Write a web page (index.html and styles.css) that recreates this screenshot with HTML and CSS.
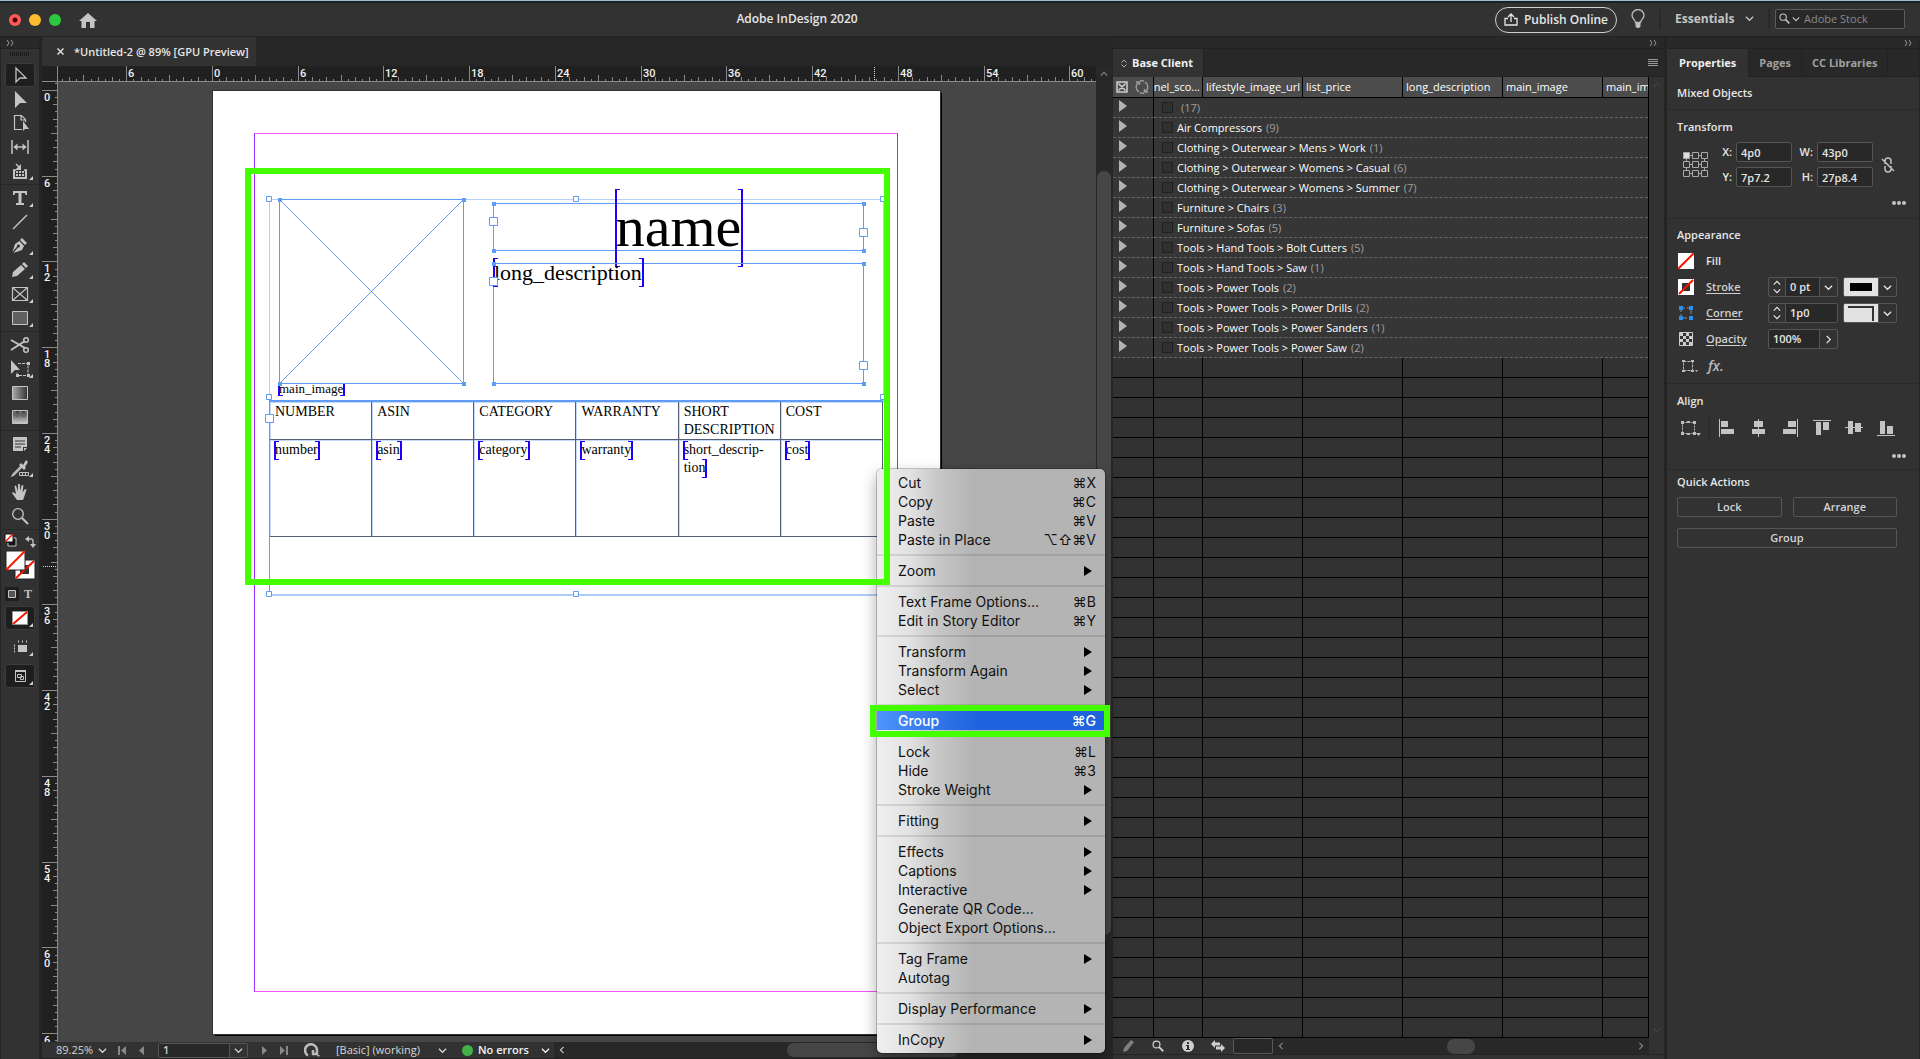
FILE: index.html
```html
<!DOCTYPE html>
<html lang="en">
<head>
<meta charset="utf-8">
<title>Adobe InDesign 2020</title>
<link rel="stylesheet" href="styles.css">
</head>
<body>
<svg class="defs" aria-hidden="true">
  <symbol id="chev" viewBox="0 0 10 10"><path d="M1 3l4 4 4-4" fill="none" stroke="currentColor" stroke-width="1.4"/></symbol>
  <symbol id="chev-up" viewBox="0 0 10 10"><path d="M1 7l4-4 4 4" fill="none" stroke="currentColor" stroke-width="1.4"/></symbol>
  <symbol id="chev-left" viewBox="0 0 10 10"><path d="M7 1L3 5l4 4" fill="none" stroke="currentColor" stroke-width="1.4"/></symbol>
  <symbol id="chev-right" viewBox="0 0 10 10"><path d="M3 1l4 4-4 4" fill="none" stroke="currentColor" stroke-width="1.4"/></symbol>
  <symbol id="dbl" viewBox="0 0 8 6"><path d="M1 0l2 3-2 3M5 0l2 3-2 3" fill="none" stroke="currentColor"/></symbol>
  <symbol id="dots" viewBox="0 0 14 4"><circle cx="2" cy="2" r="2"/><circle cx="7" cy="2" r="2"/><circle cx="12" cy="2" r="2"/></symbol>
  <symbol id="none" viewBox="0 0 16 16"><path d="M0 0h16v16H0z" fill="#fff"/><path d="M0 16L16 0" stroke="#f91400" stroke-width="2"/></symbol>
  <symbol id="tri" viewBox="0 0 8 10"><path d="M0 0l8 5-8 5z"/></symbol>
  <symbol id="mag" viewBox="0 0 16 16"><circle cx="6" cy="6" r="4.6" fill="none" stroke="currentColor" stroke-width="1.6"/><path d="M9.5 9.5L15 15" stroke="currentColor" stroke-width="2.4"/></symbol>
</svg>

<header class="titlebar">
  <div class="lights"><i class="light red"></i><i class="light amber"></i><i class="light lime"></i></div>
  <button class="home" aria-label="Home"><svg viewBox="0 0 18 15" width="18" height="15"><path d="M9 0l9 8h-2.500v7H11V9H7v6H2.500V8H0z" fill="#c4c4c4"/></svg></button>
  <h1 class="app-name">Adobe InDesign 2020</h1>
  <div class="title-tools">
    <button class="publish"><svg viewBox="0 0 14 13" width="14" height="13" fill="none" stroke="currentColor" stroke-width="1.300"><path d="M4 5.500H1V12h12V5.500h-3M7 9V1M4 4l3-3 3 3"/></svg>Publish Online</button>
    <button class="bulb" aria-label="Learn"><svg viewBox="0 0 14 20" width="14" height="20"><path d="M4.500 13.500C4.500 11 1 9.500 1 6.500a6 6 0 0 1 12 0c0 3-3.500 4.500-3.500 7z" fill="none" stroke="#bdbdbd" stroke-width="1.300"/><path d="M4.500 14h5v3.500L8 19H6l-1.500-1.500z" fill="#bdbdbd"/></svg></button>
    <span class="vbar"></span>
    <label class="pick workspace"><select aria-label="Workspace"><option>Essentials</option></select><svg width="9" height="9"><use href="#chev"/></svg></label>
    <span class="vbar"></span>
    <label class="stock"><svg width="11" height="11"><use href="#mag"/></svg><svg width="8" height="8"><use href="#chev"/></svg><input type="search" placeholder="Adobe Stock" aria-label="Adobe Stock"></label>
  </div>
</header>

<main class="workspace-grid">
  <nav class="tools" aria-label="Tools">
    <div class="strip strip-left"><svg width="8" height="6"><use href="#dbl"/></svg></div>
    <div class="grip"></div>
    <button class="tool on" aria-label="Selection"><svg viewBox="0 0 30 24"><path d="M11 5v14l4-4h6z" fill="none" stroke="#c4c4c4" stroke-width="1.300"/></svg></button>
    <button class="tool" aria-label="Direct selection"><svg viewBox="0 0 30 24"><path d="M10 4v17l5-5h7z"/></svg></button>
    <button class="tool" aria-label="Page"><svg viewBox="0 0 30 24"><path d="M17 18.500H9.500v-14h7l4 4V11M16 5v4h4" fill="none" stroke="#c4c4c4" stroke-width="1.200"/><path d="M18 10v10l2-2h4z"/></svg></button>
    <button class="tool" aria-label="Gap"><svg viewBox="0 0 30 24"><path d="M7 5v14M23 5v14M9 12h12" stroke="#c4c4c4" stroke-width="1.500"/><path d="M8.500 12l4-3.500v7zM21.500 12l-4-3.500v7z"/></svg></button>
    <button class="tool more" aria-label="Content collector"><svg viewBox="0 0 30 24"><path d="M9 11v8h12v-8" fill="none" stroke="#c4c4c4" stroke-width="2"/><path d="M8 11h3M19 11h3M11 5l4 4" stroke="#c4c4c4" stroke-width="1.500"/><path d="M16 5v6h-6zM11 12h2v2h-2zM14 12h2v2h-2zM17 12h2v2h-2zM11 15h2v2h-2zM14 15h2v2h-2zM17 15h2v2h-2z"/></svg></button>
    <hr>
    <button class="tool more" aria-label="Type"><svg viewBox="0 0 30 24"><path d="M8 5h14v4h-1.500l-.5-2h-3.500v10h2.500v2h-8v-2h2.500V7H10l-.5 2H8z"/></svg></button>
    <button class="tool" aria-label="Line"><svg viewBox="0 0 30 24"><path d="M8 19L22 5" stroke="#c4c4c4" stroke-width="1.500"/></svg></button>
    <button class="tool more" aria-label="Pen"><svg viewBox="0 0 30 24"><path d="M17 4l5 5-2 2-5-5zM14.500 7l4.500 5-2 4-8.500 3 4.500-5.500a1.500 1.500 0 1 0-1-1L7.500 18l2.500-8z"/></svg></button>
    <button class="tool more" aria-label="Pencil"><svg viewBox="0 0 30 24"><path d="M19 4l4 4-2 2-4-4zM16 7l4 4-8 7-5 1 1-5z"/></svg></button>
    <button class="tool more" aria-label="Rectangle frame"><svg viewBox="0 0 30 24"><path d="M7.500 5.500h15v13h-15zM7.500 5.500l15 13M22.500 5.500l-15 13" fill="none" stroke="#c4c4c4" stroke-width="1.200"/></svg></button>
    <button class="tool more" aria-label="Rectangle"><svg viewBox="0 0 30 24"><path d="M7.500 5.500h15v13h-15z" fill="#606060" stroke="#c4c4c4"/></svg></button>
    <hr>
    <button class="tool" aria-label="Scissors"><svg viewBox="0 0 30 24"><path d="M6 7l14 8M6 17L20 8" stroke="#c4c4c4" stroke-width="2"/><circle cx="21" cy="7" r="2.300" fill="none" stroke="#c4c4c4" stroke-width="1.500"/><circle cx="21" cy="17" r="2.300" fill="none" stroke="#c4c4c4" stroke-width="1.500"/></svg></button>
    <button class="tool more" aria-label="Free transform"><svg viewBox="0 0 30 24"><path d="M6 3v14l4-4h5z"/><path d="M13 6.500h10v12H12V15" fill="none" stroke="#c4c4c4" stroke-dasharray="3 1"/><path d="M22 5h3v3h-3zM22 17h3v3h-3zM11 17h3v3h-3z"/></svg></button>
    <button class="tool" aria-label="Gradient"><svg viewBox="0 0 30 24"><defs><linearGradient id="g1"><stop stop-color="#aaa"/><stop offset="1" stop-color="#333"/></linearGradient></defs><path d="M7.500 5.500h15v13h-15z" fill="url(#g1)" stroke="#c4c4c4"/></svg></button>
    <button class="tool" aria-label="Gradient feather"><svg viewBox="0 0 30 24"><defs><linearGradient id="g2" x2="0" y2="1"><stop stop-color="#333"/><stop offset="1" stop-color="#ccc"/></linearGradient></defs><path d="M7.500 5.500h15v13h-15z" fill="url(#g2)" stroke="#c4c4c4"/><path d="M8 6h3v3H8zM14 6h3v3h-3zM20 6h2v3h-2zM11 9h3v3h-3zM17 9h3v3h-3z" fill="#666"/></svg></button>
    <hr>
    <button class="tool" aria-label="Note"><svg viewBox="0 0 30 24"><path d="M8 5h14v10h-4v4H8zM22 16l-3 3v-3z"/><path d="M10 9h10M10 12h10M10 15h6" stroke="#333"/></svg></button>
    <button class="tool more" aria-label="Eyedropper"><svg viewBox="0 0 30 24"><path d="M18 9l3-5 2 2-3 5 1 1-2 2-5-5 2-2z"/><path d="M16 10l-8 8-1 2 2-1 8-8" fill="none" stroke="#c4c4c4" stroke-width="1.200"/><path d="M14.500 16.500h9v3h-9zM17.500 16v4M20.500 16v4" fill="none" stroke="#c4c4c4"/></svg></button>
    <button class="tool" aria-label="Hand"><svg viewBox="0 0 30 24"><path d="M12 20l-5-7 1-1 3 2-1.500-8 1.500-.5 2 6V4h1.800l.4 7 1.500-6 1.700.4-.8 7L20 9l1.500.5-2 6.500-1.500 4z"/></svg></button>
    <button class="tool" aria-label="Zoom"><svg viewBox="0 0 30 24"><circle cx="13" cy="10" r="5.300" fill="none" stroke="#c4c4c4" stroke-width="1.300"/><path d="M17 14l6 6" stroke="#c4c4c4" stroke-width="2"/></svg></button>
    <hr>
    <div class="swatches">
      <svg viewBox="0 0 40 48" width="40" height="48">
        <path d="M9 6h7v8H8v-3" fill="#111" stroke="#c4c4c4"/><path d="M5 2h8v8H5z" fill="#fff" stroke="#111"/><path d="M5 10l8-8" stroke="#f91400" stroke-width="1.500"/>
        <path d="M28 7h3q2 0 2 2v4" fill="none" stroke="#c4c4c4" stroke-width="1.300"/><path d="M25 7l4-3v6zM33 16l-3-4h6z" fill="#c4c4c4"/>
        <path d="M15 28h20v19H15z" fill="#fff" stroke="#222"/><path d="M20 33h9v9h-9z" fill="#333"/><path d="M16 46l18-17" stroke="#f91400" stroke-width="2"/>
        <path d="M6 19h19v19H6z" fill="#fff" stroke="#222"/><path d="M6 38l19-19" stroke="#f91400" stroke-width="2"/>
      </svg>
    </div>
    <div class="mode-row">
      <button class="mini on" aria-label="Container"><svg viewBox="0 0 8 8" width="8" height="8"><path d="M.5.5h7v7h-7z" fill="#555" stroke="#c4c4c4"/></svg></button>
      <button class="mini" aria-label="Text">T</button>
    </div>
    <button class="tool on more spaced" aria-label="Apply none"><svg viewBox="0 0 30 24"><path d="M7.500 5.500h15v13h-15z" fill="#fff" stroke="#999"/><path d="M8 18L22 6" stroke="#f91400" stroke-width="2"/></svg></button>
    <button class="tool more spaced" aria-label="View options"><svg viewBox="0 0 30 24"><path d="M13 10h9v7h-9z"/><path d="M13 6.500h11M9 10.500h3M9 13.500h3M9 16.500h3" stroke="#c4c4c4" stroke-width="2" stroke-dasharray="1 3"/></svg></button>
    <button class="tool on more spaced" aria-label="Screen mode"><svg viewBox="0 0 30 24"><path d="M10.500 6.500h10v11h-10z" fill="none" stroke="#c4c4c4"/><path d="M10 6h11v2H10z"/><path d="M12.500 10.500h4v3h-4zM15.500 12.500h3v3h-3z" fill="none" stroke="#c4c4c4"/></svg></button>
  </nav>

  <section class="doc">
    <div class="doc-tabs"><div class="doc-tab"><button class="close" aria-label="Close"><svg viewBox="0 0 7 7" width="7" height="7"><path d="M.5.5l6 6M6.500.5l-6 6" stroke="#ddd" stroke-width="1.500"/></svg></button><span>*Untitled-2 @ 89% [GPU Preview]</span></div></div>
    <div class="doc-view">
      <div class="ruler-corner"></div>
      <svg class="ruler-h" id="ruler-h"></svg>
      <div class="vscroll"><svg width="8" height="8"><use href="#chev-up"/></svg><i class="vthumb"></i></div>
      <svg class="ruler-v" id="ruler-v"></svg>
      <div class="canvas">
        <div class="page">
          <div class="margins"></div>
          <div class="bounds"></div>
          <div class="frame text-frame name-frame"><span class="tag name-tag">name</span></div>
          <div class="frame text-frame desc-frame"><span class="tag desc-tag">long_description</span></div>
          <div class="caption"><span class="tag">main_image</span></div>
          <table class="layout-table">
            <thead><tr><th>NUMBER</th><th>ASIN</th><th>CATEGORY</th><th>WARRANTY</th><th>SHORT DESCRIPTION</th><th>COST</th></tr></thead>
            <tbody><tr><td><span class="tag">number</span></td><td><span class="tag">asin</span></td><td><span class="tag">category</span></td><td><span class="tag">warranty</span></td><td><span class="tag open">short_descrip-</span><br><span class="tag shut">tion</span></td><td><span class="tag">cost</span></td></tr></tbody>
          </table>
          <svg class="handles" width="630" height="406" viewBox="0 0 630 406" fill="none" stroke="#5f9cf8">
            <path d="M17.500 7.500h184v184h-184zM17.500 7.500l184 184M201.500 7.500l-184 184"/>
            <path d="M7.500 209v194h615"/>
            <g fill="#5f9cf8" stroke="none">
              <path d="M16 6h4v4h-4zM200 6h4v4h-4zM16 190h4v4h-4zM200 190h4v4h-4z"/>
              <path d="M230 10h4v4h-4zM600 10h4v4h-4zM230 57h4v4h-4zM600 57h4v4h-4zM230 70h4v4h-4zM600 70h4v4h-4zM230 190h4v4h-4zM600 190h4v4h-4z"/>
            </g>
            <g fill="#fff">
              <path d="M4.500 4.500h5v5h-5zM311.500 4.500h5v5h-5zM618.500 4.500h5v5h-5zM4.500 202.500h5v5h-5zM618.500 202.500h5v5h-5zM4.500 399.500h5v5h-5zM311.500 399.500h5v5h-5z"/>
              <path d="M227.500 25.500h8v8h-8zM597.500 36.500h8v8h-8zM227.500 85.500h8v8h-8zM597.500 169.500h8v8h-8zM3.500 222.500h8v8h-8z"/>
            </g>
          </svg>
        </div>
      </div>
    </div>
    <footer class="status">
      <label class="pick zoom-pick"><select aria-label="Zoom"><option>89.25%</option></select><svg width="9" height="9"><use href="#chev"/></svg></label>
      <button class="nav-btn first" aria-label="First page"><svg viewBox="0 0 8 9" width="8" height="9"><path d="M0 0h2v9H0zM8 0v9L3 4.500z"/></svg></button>
      <button class="nav-btn prev" aria-label="Previous page"><svg viewBox="0 0 8 9" width="8" height="9"><path d="M6 0v9L1 4.500z"/></svg></button>
      <div class="page-box"><input value="1" aria-label="Page"><button aria-label="Pages"><svg width="9" height="9"><use href="#chev"/></svg></button></div>
      <button class="nav-btn next" aria-label="Next page"><svg viewBox="0 0 8 9" width="8" height="9"><path d="M2 0v9l5-4.500z"/></svg></button>
      <button class="nav-btn last" aria-label="Last page"><svg viewBox="0 0 8 9" width="8" height="9"><path d="M6 0h2v9H6zM0 0v9l5-4.500z"/></svg></button>
      <svg class="ahead" viewBox="0 0 16 14" width="16" height="14"><path d="M4 12.500A6 6 0 1 1 13 7v4H9V7" fill="none" stroke="#bbb" stroke-width="2.500"/><path d="M13 12h3l-1.500 2z" fill="#bbb"/></svg>
      <label class="pick profile-pick"><select aria-label="Preflight profile"><option>[Basic] (working)</option></select><svg width="9" height="9"><use href="#chev"/></svg></label>
      <i class="ok"></i>
      <label class="pick errors-pick"><select aria-label="Errors"><option>No errors</option></select><svg width="9" height="9"><use href="#chev"/></svg></label>
      <div class="hscroll"><svg width="8" height="8"><use href="#chev-left"/></svg><i class="hthumb"></i></div>
    </footer>

    <ul class="menu" role="menu">
      <li>Cut<kbd>⌘X</kbd></li><li>Copy<kbd>⌘C</kbd></li><li>Paste<kbd>⌘V</kbd></li><li>Paste in Place<kbd>⌥⇧⌘V</kbd></li>
      <li class="sep"></li>
      <li class="sub">Zoom<svg width="8" height="10"><use href="#tri"/></svg></li>
      <li class="sep"></li>
      <li>Text Frame Options...<kbd>⌘B</kbd></li><li>Edit in Story Editor<kbd>⌘Y</kbd></li>
      <li class="sep"></li>
      <li class="sub">Transform<svg width="8" height="10"><use href="#tri"/></svg></li><li class="sub">Transform Again<svg width="8" height="10"><use href="#tri"/></svg></li><li class="sub">Select<svg width="8" height="10"><use href="#tri"/></svg></li>
      <li class="sep"></li>
      <li class="active">Group<kbd>⌘G</kbd></li>
      <li class="sep"></li>
      <li>Lock<kbd>⌘L</kbd></li><li>Hide<kbd>⌘3</kbd></li><li class="sub">Stroke Weight<svg width="8" height="10"><use href="#tri"/></svg></li>
      <li class="sep"></li>
      <li class="sub">Fitting<svg width="8" height="10"><use href="#tri"/></svg></li>
      <li class="sep"></li>
      <li class="sub">Effects<svg width="8" height="10"><use href="#tri"/></svg></li><li class="sub">Captions<svg width="8" height="10"><use href="#tri"/></svg></li><li class="sub">Interactive<svg width="8" height="10"><use href="#tri"/></svg></li><li>Generate QR Code...</li><li>Object Export Options...</li>
      <li class="sep"></li>
      <li class="sub">Tag Frame<svg width="8" height="10"><use href="#tri"/></svg></li><li>Autotag</li>
      <li class="sep"></li>
      <li class="sub">Display Performance<svg width="8" height="10"><use href="#tri"/></svg></li>
      <li class="sep"></li>
      <li class="sub">InCopy<svg width="8" height="10"><use href="#tri"/></svg></li>
    </ul>
    <div class="marker marker-selection"></div>
    <div class="marker marker-menu"></div>
  </section>

  <section class="data">
    <div class="strip strip-right"><svg width="8" height="6"><use href="#dbl"/></svg></div>
    <div class="panel-tabs">
      <button class="panel-tab active"><svg viewBox="0 0 6 9" width="6" height="9" fill="none" stroke="#aaa"><path d="M.5 3.500L3 1l2.500 2.500M.5 5.500L3 8l2.500-2.500"/></svg>Base Client</button>
      <button class="burger" aria-label="Panel menu"><svg viewBox="0 0 10 8" width="10" height="8"><path d="M0 .5h10M0 2.500h10M0 4.500h10M0 6.500h10" stroke="#999"/></svg></button>
    </div>
    <div class="data-body">
      <table class="grid">
        <colgroup><col class="c-tools"><col class="c-score"><col class="c-std"><col class="c-std"><col class="c-std"><col class="c-std"><col></colgroup>
        <thead><tr>
          <th class="head-icons"><div><svg viewBox="0 0 12 12" width="12" height="12" fill="none" stroke="#d0d0d0" stroke-width="1.500"><path d="M1 1h10v10H1zM2.500 2.500l7 7M9.500 2.500l-7 7"/></svg><svg viewBox="0 0 16 16" width="16" height="16" fill="none" stroke="#9a9a9a" stroke-width="1.500"><path d="M5 3a6 6 0 0 0-2 8l2 2M2 3h3.500v3M6 14a6 6 0 0 0 4 0M11 13a6 6 0 0 0 2-8l-2-2M14 13h-3.500v-3M10 2a6 6 0 0 0-4 0"/></svg></div></th>
          <th class="cut"><div>nnel_sco...</div></th><th>lifestyle_image_url</th><th>list_price</th><th>long_description</th><th>main_image</th><th>main_ima</th>
        </tr></thead>
        <tbody id="rows"></tbody>
      </table>
      <div class="data-scroll"><svg width="8" height="8"><use href="#chev-up"/></svg><svg width="8" height="8"><use href="#chev"/></svg></div>
    </div>
    <footer class="data-foot">
      <button aria-label="Edit"><svg viewBox="0 0 12 12" width="12" height="12" fill="#808080"><path d="M9 0l3 2-7 9-4 1 1-4z"/></svg></button>
      <button aria-label="Search"><svg width="12" height="12"><use href="#mag"/></svg></button>
      <button aria-label="Info"><svg viewBox="0 0 12 12" width="12" height="12"><circle cx="6" cy="6" r="6" fill="#d0d0d0"/><path d="M5 2h2v2H5zM4 5h3v4h1v1H4V9h1V6H4z" fill="#333"/></svg></button>
      <button aria-label="Sync"><svg viewBox="0 0 14 12" width="14" height="12" fill="#d0d0d0"><path d="M4 0v2.500h5v3H4V8L0 4zM10 4v2.500H5v3h5V12l4-4z"/></svg></button>
      <input aria-label="Filter">
      <div class="foot-scroll"><svg width="8" height="8"><use href="#chev-left"/></svg><i></i><svg width="8" height="8"><use href="#chev-right"/></svg></div>
    </footer>
  </section>

  <aside class="props">
    <div class="strip strip-right"><svg width="8" height="6"><use href="#dbl"/></svg></div>
    <div class="panel-tabs">
      <button class="panel-tab active first-tab">Properties</button><button class="panel-tab">Pages</button><button class="panel-tab">CC Libraries</button>
    </div>
    <section class="kind"><h2>Mixed Objects</h2></section>
    <section class="transform">
      <h2>Transform</h2>
      <div class="transform-row">
        <svg viewBox="0 0 26 26" width="26" height="26" fill="none" stroke="#a8a8a8"><path d="M7 3.500h3M16 3.500h3M7 12.500h3M16 12.500h3M7 21.500h3M16 21.500h3M3.500 7v3M3.500 16v3M21.500 7v3M21.500 16v3"/><path d="M.5.5h6v6h-6z" fill="#ddd"/><path d="M9.500.5h6v6h-6zM18.500.5h6v6h-6zM.5 9.500h6v6h-6zM9.500 9.500h6v6h-6zM18.500 9.500h6v6h-6zM.5 18.500h6v6h-6zM9.500 18.500h6v6h-6zM18.500 18.500h6v6h-6z"/></svg>
        <div class="fields">
          <label for="fx">X:</label><input id="fx" value="4p0"><label for="fw">W:</label><input id="fw" value="43p0">
          <label for="fy">Y:</label><input id="fy" value="7p7.2"><label for="fh">H:</label><input id="fh" value="27p8.4">
        </div>
        <svg class="link" viewBox="0 0 14 16" width="14" height="16" fill="none" stroke="#c0c0c0" stroke-width="1.500"><path d="M4 7V4a3 3 0 0 1 6 0v3M4 9v3a3 3 0 0 0 6 0V9M1 2l12 12"/></svg>
      </div>
      <button class="ellipsis" aria-label="More transform options"><svg width="14" height="4"><use href="#dots"/></svg></button>
    </section>
    <section class="appearance">
      <h2>Appearance</h2>
      <div class="look">
        <svg width="16" height="16"><use href="#none"/></svg><span class="plain">Fill</span><span></span><span></span>
        <svg viewBox="0 0 16 16" width="16" height="16"><path d="M0 0h16v16H0z" fill="#fff"/><path d="M4 4h8v8H4z" fill="#333"/><path d="M1 15L15 1" stroke="#f91400" stroke-width="2"/></svg><a href="#">Stroke</a>
        <div class="combo"><button class="spin" aria-label="Step stroke"><svg width="8" height="8"><use href="#chev-up"/></svg><svg width="8" height="8"><use href="#chev"/></svg></button><input value="0 pt" aria-label="Stroke weight"><button class="drop" aria-label="Weights"><svg width="9" height="9"><use href="#chev"/></svg></button></div>
        <div class="combo sample"><span class="chip"><i class="bar"></i></span><button class="drop" aria-label="Stroke types"><svg width="9" height="9"><use href="#chev"/></svg></button></div>
        <svg viewBox="0 0 16 16" width="16" height="16"><path d="M3 3h10v10H3z" fill="none" stroke="#888" stroke-dasharray="4 2"/><path d="M1 1h4v4H1zM11 1h4v4h-4zM1 11h4v4H1zM11 11h4v4h-4z" fill="#2f8df0"/></svg><a href="#">Corner</a>
        <div class="combo"><button class="spin" aria-label="Step corner"><svg width="8" height="8"><use href="#chev-up"/></svg><svg width="8" height="8"><use href="#chev"/></svg></button><input value="1p0" aria-label="Corner size"></div>
        <div class="combo sample"><span class="chip"><i class="corner"></i></span><button class="drop" aria-label="Corner shapes"><svg width="9" height="9"><use href="#chev"/></svg></button></div>
        <svg viewBox="0 0 16 16" width="16" height="16"><path d="M1.500 1.500h13v13h-13z" fill="#333" stroke="#ccc"/><path d="M2 2h3v3H2zM8 2h3v3H8zM5 5h3v3H5zM11 5h3v3h-3zM2 8h3v3H2zM8 8h3v3H8zM5 11h3v3H5zM11 11h3v3h-3z" fill="#ccc"/></svg><a href="#">Opacity</a>
        <div class="combo"><input value="100%" aria-label="Opacity value"><button class="drop" aria-label="Opacity slider"><svg width="9" height="9"><use href="#chev-right"/></svg></button></div>
      </div>
      <div class="fx-row">
        <button aria-label="Object target"><svg viewBox="0 0 16 14" width="16" height="14"><path d="M1.500 2.500h9v9h-9z" fill="none" stroke="#bbb" stroke-dasharray="3 1"/><path d="M0 1h3v2H0zM9 1h3v2H9zM0 11h3v2H0zM9 11h3v2H9zM13 11h3l-1.500 2z" fill="#bbb"/></svg></button>
        <button class="fx">fx<span>.</span></button>
      </div>
    </section>
    <section class="align">
      <h2>Align</h2>
      <div class="align-row">
        <button aria-label="Align to"><svg viewBox="0 0 20 18" width="20" height="18"><path d="M1.500 3.500h12v11h-12z" fill="none" stroke="#bbb" stroke-dasharray="2 1"/><path d="M0 2h3v3H0zM6 2h3v2H6zM12 2h3v3h-3zM0 13h3v3H0zM12 13h3v3h-3zM6 14h3v2H6zM15 14h5l-2.500 3z" fill="#bbb"/></svg></button>
        <span class="vbar"></span>
        <button aria-label="Align left"><svg viewBox="0 0 18 18"><path d="M1 0h1v18H1zM3 2h7v6H3zM3 10h13v5H3z"/></svg></button>
        <button aria-label="Align centre"><svg viewBox="0 0 18 18"><path d="M8 0h1v18H8zM4 2h9v6H4zM2 10h13v5H2z"/></svg></button>
        <button aria-label="Align right"><svg viewBox="0 0 18 18"><path d="M16 0h1v18h-1zM7 2h8v6H7zM2 10h13v5H2z"/></svg></button>
        <button aria-label="Align top"><svg viewBox="0 0 18 18"><path d="M0 1h18v1H0zM3 3h5v13H3zM10 3h6v8h-6z"/></svg></button>
        <button aria-label="Align middle"><svg viewBox="0 0 18 18"><path d="M0 8h18v1H0zM3 2h5v13H3zM10 4h6v9h-6z"/></svg></button>
        <button aria-label="Align bottom"><svg viewBox="0 0 18 18"><path d="M0 16h18v1H0zM3 2h5v13H3zM10 7h6v8h-6z"/></svg></button>
      </div>
      <button class="ellipsis" aria-label="More align options"><svg width="14" height="4"><use href="#dots"/></svg></button>
    </section>
    <section class="quick">
      <h2>Quick Actions</h2>
      <div class="quick-grid"><button>Lock</button><button>Arrange</button><button class="full">Group</button></div>
    </section>
  </aside>
</main>
<script src="app.js"></script>
</body>
</html>
```
FILE: styles.css
```css
* { box-sizing: border-box; }
html, body { height: 100%; }
body {
  margin: 0;
  display: flex;
  flex-direction: column;
  overflow: hidden;
  background: #323232;
  color: #e6e6e6;
  font: 600 11px/16px "Open Sans", "Noto Sans", sans-serif;
}
button, input, select { font: inherit; color: inherit; }
button { padding: 0; border: 0; background: none; display: inline-flex; align-items: center; justify-content: center; }
select { appearance: none; border: 0; background: none; padding: 0; margin: 0; }
input { min-width: 0; margin: 0; padding: 0 4px; border: 0; background: #282828; border-radius: 0; }
h1, h2 { margin: 0; font: inherit; }
svg { flex: none; display: block; }
.defs { position: absolute; width: 0; height: 0; }

/* Title bar */
.titlebar {
  display: grid;
  grid-template-columns: minmax(0, 1fr) auto minmax(0, 1fr);
  align-items: center;
  height: 37px;
  flex: none;
  padding: 0 15px 0 9px;
  border-top: 1px solid #a9bcc6;
  border-bottom: 1px solid #222;
  box-shadow: inset 0 2px 0 #14222a;
}
.lights { grid-area: 1 / 1; display: flex; gap: 8px; }
.light { width: 12px; height: 12px; border-radius: 50%; margin-top: 3px; }
.red { background: radial-gradient(circle, #4d0000 2px, #fc5b57 3px); }
.amber { background: #fdbc2e; }
.lime { background: #2bc840; }
.home { grid-area: 1 / 1; justify-self: start; margin-left: 70px; margin-top: 3px; }
.app-name { grid-area: 1 / 2; font-size: 12px; margin-right: 320px; }
.title-tools { grid-area: 1 / 3; display: flex; align-items: center; justify-content: flex-end; gap: 14px; }
.publish { height: 26px; width: 122px; flex: none; gap: 6px; border: 1px solid #d0d0d0; border-radius: 13px; font-size: 12px; margin-top: 2px; }
.vbar { width: 2px; height: 20px; background: #2a2a2a; }
.pick { display: flex; align-items: center; color: #d6d6d6; }
.workspace { gap: 4px; font-size: 12px; font-weight: 700; color: #c4c4c4; }
.workspace select { width: 66px; }
.stock { display: flex; align-items: center; gap: 2px; width: 130px; height: 20px; padding: 0 3px; border: 1px solid #5c5c5c; border-radius: 2px; background: #282828; color: #c4c4c4; margin-left: -9px; }
.stock input { flex: 1; font-weight: 400; padding: 0 2px; outline: 0; background: none; }
.stock input::placeholder { color: #8a8a8a; opacity: 1; }

.workspace-grid { flex: 1; min-height: 0; display: grid; grid-template-columns: 42px minmax(0, 1fr) 554px 253px; }

/* Tool column */
.strip { height: 12px; flex: none; display: flex; align-items: center; background: #282828; border-bottom: 1px solid #222; color: #999; }
.strip-left { padding-left: 5px; }
.strip-right { justify-content: flex-end; padding-right: 7px; }
.tools { display: flex; flex-direction: column; border-right: 3px solid #242424; border-left: 1px solid #242424; padding-bottom: 8px; }
.grip { width: 20px; height: 4px; margin: 3px 9px 7px; background: repeating-linear-gradient(90deg, #1c1c1c 0 1px, #323232 1px 2px); }
.tool { position: relative; height: 24px; flex: none; margin: 0 4px; border: 1px solid transparent; border-radius: 3px; fill: #c4c4c4; }
.tool svg { width: 30px; height: 24px; }
.tool.on { background: #1e1e1e; border-color: #3c3c3c; }
.tool.more::after { content: ""; position: absolute; right: 1px; bottom: 2px; border: 2px solid transparent; border-right-color: #d0d0d0; border-bottom-color: #d0d0d0; }
.tools hr { width: 36px; margin: 1px auto; border: 0; height: 1px; flex: none; background: #272727; }
.swatches { margin-left: -1px; padding-top: 1px; height: 52px; }
.mode-row { display: flex; gap: 2px; padding: 4px 4px 5px; }
.mini { width: 14px; height: 14px; border-radius: 2px; font: 700 12px/14px "Liberation Serif", serif; color: #c4c4c4; }
.mini.on { background: #1e1e1e; }
.tool.spaced { margin-bottom: 5px; }

/* Document */
.doc { display: flex; flex-direction: column; min-width: 0; position: relative; border-right: 2px solid #262626; }
.doc-tabs { height: 29px; flex: none; background: #262626; display: flex; }
.doc-tab { display: flex; align-items: center; gap: 10px; width: 214px; padding-left: 15px; background: #323232; }
.doc-view { flex: 1; min-height: 0; display: grid; grid-template: 16px minmax(0, 1fr) / 16px minmax(0, 1fr) 15px; }
.ruler-corner { background: radial-gradient(#888 1px, #202020 1px) 0 0 / 3px 3px; background: #202020; border-right: 1px solid #8a8a8a; border-bottom: 1px solid #8a8a8a; }
.ruler-h, .ruler-v { width: 100%; height: 100%; background: #202020; overflow: hidden; }
.ruler-h { border-bottom: 1px solid #8a8a8a; }
.ruler-v { border-right: 1px solid #8a8a8a; }
.ruler-h text, .ruler-v text { fill: #f0f0f0; font: 500 11px Roboto, sans-serif; }
.vscroll { grid-area: 1 / 3 / 3 / 4; background: #282828; display: flex; flex-direction: column; align-items: center; padding-top: 4px; color: #888; }
.vthumb { width: 14px; height: 764px; margin-top: 93px; border-radius: 7px; background: #464646; }
.canvas { position: relative; overflow: hidden; background: #464646; }
.page { position: absolute; left: 155px; top: 9px; width: 727px; height: 943px; background: #fff; box-shadow: 0 0 0 1px #333, 2px 2px 0 #000; color: #000; font: 14px/18px "Liberation Serif", serif; }
.margins { position: absolute; left: 41px; top: 42px; width: 644px; height: 859px; border: 1px solid #f055f5; border-left-color: #9b30ff; border-right-color: #9b30ff; }
.bounds { position: absolute; left: 56px; top: 108px; width: 615px; height: 204px; border: 1px solid #b4d0fb; border-bottom: 0; }
.frame { position: absolute; left: 280px; width: 371px; border: 1px solid #5f9cf8; }
.name-frame { top: 112px; height: 48px; font-size: 58px; line-height: 46px; text-align: center; }
.desc-frame { top: 172px; height: 121px; font-size: 22px; line-height: 18px; }
.caption { position: absolute; left: 66px; top: 292px; font-size: 13px; line-height: 12px; }
.handles { position: absolute; left: 49px; top: 101px; }
.tag { position: relative; display: inline-block; }
.tag::before, .tag::after { content: ""; position: absolute; top: 0; bottom: -1px; width: 3px; border: 1px solid #1f00ff; }
.tag::before { left: -1px; border-left-width: 2px; border-right: 0; }
.tag::after { right: -2px; border-right-width: 2px; border-left: 0; }
.tag.open::after, .tag.shut::before { display: none; }
.name-tag { height: 46px; }
.name-tag::before, .name-tag::after { top: -15px; bottom: -17px; }
.desc-tag::before, .desc-tag::after { top: -6px; bottom: -5px; }
.layout-table { position: absolute; left: 56px; top: 309px; width: 614px; table-layout: fixed; border-collapse: collapse; border: 1px solid #555f75; border-top: 2px solid #5f9cf8; }
.layout-table th, .layout-table td { padding: 1px 4px 0 5px; vertical-align: top; text-align: left; font-weight: 400; border: 1px solid #555f75; box-shadow: inset 1px 1px 0 #c3dafc; }
.layout-table th { height: 37px; }
.layout-table td { height: 97px; }
.marker { position: absolute; border: 6px solid #44ff00; pointer-events: none; }
.marker-selection { left: 203px; top: 131px; width: 645px; height: 417px; }
.marker-menu { left: 828px; top: 668px; width: 240px; height: 32px; }

/* Status bar */
.status { height: 17px; flex: none; display: flex; align-items: center; background: #323232; border-bottom: 1px solid #222; color: #ccc; fill: #888; }
.status select { font-weight: 400; }
.zoom-pick { margin-left: 14px; width: 62px; gap: 4px; }
.zoom-pick select { width: 38px; }
.nav-btn { width: 8px; }
.prev, .next, .last { margin-left: 12px; }
.page-box { display: flex; width: 90px; height: 15px; margin-left: 12px; border: 1px solid #555; border-radius: 2px; }
.page-box input { width: 71px; border-right: 1px solid #555; }
.page-box button { flex: 1; }
.ahead { margin: 0 16px; }
.profile-pick { width: 126px; }
.profile-pick select { width: 102px; }
.ok { width: 11px; height: 11px; border-radius: 50%; background: #44b04a; margin-right: 5px; }
.errors-pick { width: 76px; color: #f2f2f2; }
.errors-pick select { width: 63px; font-weight: 600; }
.hscroll { flex: 1; align-self: stretch; display: flex; align-items: center; padding-left: 4px; background: #282828; }
.hthumb { width: 171px; height: 14px; margin-left: 221px; border-radius: 7px; background: #464646; }

/* Context menu */
.menu {
  position: absolute;
  left: 835px;
  top: 432px;
  width: 228px;
  margin: 0;
  padding: 4px 0;
  list-style: none;
  border-radius: 5px;
  background: linear-gradient(90deg, #efeff0 0, #e2e2e2 32px, #c8c8c8 60px, #b4b4b4 95px);
  box-shadow: 0 0 0 1px rgba(0, 0, 0, .2), 0 6px 16px rgba(0, 0, 0, .35);
  color: #111;
  font: 400 14px/19px Inter, sans-serif;
}
.menu li { display: flex; justify-content: space-between; align-items: center; height: 19px; padding: 0 9px 0 21px; }
.menu .sub { padding-right: 13px; }
.menu kbd { font: inherit; }
.menu .sep { height: 2px; margin: 5px 0; padding: 0; background: rgba(0, 0, 0, .1); }
.menu .active { background: linear-gradient(90deg, #4f93fb, #2063de 100px); color: #fff; font-weight: 500; }

/* Data panel */
.data { display: flex; flex-direction: column; min-width: 0; border-right: 3px solid #242424; padding-bottom: 4px; }
.panel-tabs { height: 28px; flex: none; display: flex; background: #282828; border-bottom: 1px solid #222; }
.panel-tab { padding: 0 10px; gap: 5px; font-size: 11px; font-weight: 700; color: #a0a0a0; border-right: 1px solid #222; }
.panel-tab.active { background: #323232; color: #f0f0f0; margin-bottom: -1px; }
.panel-tab.active:not(.first-tab) { padding-left: 8px; }
.panel-tab.first-tab { padding: 0 12px; }
.burger { margin-left: auto; padding-right: 6px; }
.data-body { flex: 1; min-height: 0; display: flex; overflow: hidden; }
.grid { flex: 1; width: 100%; align-self: flex-start; table-layout: fixed; border-spacing: 0; border-right: 1px solid #000; font-weight: 500; }
.c-tools { width: 41px; }
.c-score { width: 49px; }
.c-std { width: 100px; }
.grid th { height: 21px; padding: 0 0 0 3px; overflow: hidden; white-space: nowrap; text-align: left; font-weight: 500; color: #fff; background: #4c4c4c; border-right: 1px solid #000; border-bottom: 1px solid #000; }
.grid th:last-child, .grid td:last-child { border-right: 0; }
.grid th div { display: flex; align-items: center; gap: 6px; }
.grid .cut { padding: 0 2px 0 0; }
.grid .cut div { justify-content: flex-end; overflow: hidden; }
.grid td { height: 20px; padding: 0; border-right: 1px solid #000; border-bottom: 1px solid #000; }
.grid .group td { border-bottom: 1px dashed #666; background: #363636; color: #fff; white-space: nowrap; }
.twist { width: 100%; height: 12px; padding-left: 6px; justify-content: flex-start; fill: #b4b4b4; }
.twist svg { margin-top: 2px; }
.grid label { display: flex; align-items: center; padding-left: 8px; height: 18px; }
.grid input { appearance: none; width: 11px; height: 11px; margin-right: 4px; background: #303030; border: 1px solid #202020; }
.count { color: #a0a0a0; font-weight: 400; margin-left: 4px; }
.data-scroll { width: 15px; display: flex; flex-direction: column; justify-content: space-between; align-items: center; padding: 4px 0; color: #444; }
.data-foot { height: 17px; flex: none; display: flex; align-items: center; border-bottom: 1px solid #242424; }
.data-foot button { width: 30px; color: #d0d0d0; }
.data-foot input { width: 40px; height: 16px; border: 1px solid #5a5a5a; border-radius: 2px; }
.foot-scroll { flex: 1; height: 16px; margin-right: 15px; padding: 0 4px; display: flex; align-items: center; justify-content: space-between; background: #282828; color: #888; }
.foot-scroll i { width: 28px; height: 15px; border-radius: 7px; background: #464646; }

/* Properties panel */
.props { min-width: 0; border-right: 1px solid #242424; }
.props section { padding: 0 22px 0 10px; border-bottom: 1px solid #2a2a2a; }
.props .kind { padding-top: 8px; padding-bottom: 8px; }
.props .transform { padding-top: 9px; }
.transform-row { display: flex; align-items: center; margin-top: 7px; padding-left: 6px; }
.fields { flex: 1; display: grid; grid-template-columns: 27px 1fr 25px 1fr; gap: 5px 0; align-items: center; margin-right: 8px; }
.fields label { text-align: right; padding-right: 4px; }
.fields input, .combo { height: 20px; border: 1px solid #555; border-radius: 2px; }
.link { margin-right: 2px; }
.ellipsis { display: flex; margin: 0 -9px 0 auto; height: 31px; fill: #c4c4c4; }
.props .appearance { padding-top: 8px; padding-bottom: 7px; }
.look { display: grid; grid-template-columns: 28px 62px 70px 1fr; grid-auto-rows: 20px; row-gap: 6px; align-items: center; margin-top: 8px; padding-left: 1px; }
.look a { color: #d0d0d0; text-underline-offset: 2px; }
.combo { display: flex; align-items: stretch; overflow: hidden; color: #e6e6e6; }
.combo input { flex: 1; width: 20px; }
.spin { width: 17px; flex-direction: column; border-right: 1px solid #555; }
.drop { width: 18px; border-left: 1px solid #555; }
.sample { margin-left: 5px; }
.chip { flex: 1; display: flex; align-items: center; justify-content: center; background: #e2e2e2; }
.bar { width: 22px; height: 8px; background: #000; }
.corner { width: 26px; height: 15px; border-top: 2px solid #333; border-right: 2px solid #333; }
.fx-row { display: flex; gap: 10px; height: 20px; margin-top: 7px; padding-left: 5px; }
.fx { font: italic 600 14px/20px "Open Sans", sans-serif; color: #bbb; }
.props .align { padding-top: 9px; padding-right: 24px; }
.align-row { display: flex; align-items: center; justify-content: space-between; height: 20px; margin-top: 9px; padding-left: 4px; fill: #c4c4c4; }
.align-row button svg { min-width: 18px; height: 18px; }
.align-row button:not(:first-child) { width: 18px; }
.align-row .vbar { width: 1px; height: 24px; margin: 0 -6px; }
.align .ellipsis { height: 31px; margin-right: -11px; padding-top: 4px; }
.props .quick { padding-top: 4px; border-bottom: 0; }
.quick-grid { display: grid; grid-template-columns: 1fr 1fr; gap: 11px; margin-top: 7px; }
.quick-grid button { height: 20px; border: 1px solid #555; border-radius: 2px; color: #d4d4d4; }
.full { grid-column: 1 / 3; }
```
FILE: app.js
```javascript
// Rulers: ticks every half pica, labels every six picas.
const NS = "http://www.w3.org/2000/svg";
const HALF = 7.145;

function add(svg, name, attrs, text) {
  const el = document.createElementNS(NS, name);
  for (const key in attrs) el.setAttribute(key, attrs[key]);
  if (text) el.textContent = text;
  svg.appendChild(el);
}

function ruler(id, origin, length, vertical) {
  const svg = document.getElementById(id);
  for (let i = -24; i < 140; i++) {
    const at = Math.round(origin + i * HALF);
    if (at < 0 || at > length) continue;
    const size = i % 12 === 0 ? 16 : i % 6 === 0 ? 6 : i % 2 === 0 ? 4 : 2;
    const box = vertical
      ? { x: 15 - size, y: at, width: size, height: 1 }
      : { x: at, y: 15 - size, width: 1, height: size };
    add(svg, "rect", { ...box, fill: "#8a8a8a" });
    if (i % 12 !== 0) continue;
    const label = String(Math.abs(i / 2));
    if (vertical) [...label].forEach((d, n) => add(svg, "text", { x: 2, y: at + 11 + n * 9 }, d));
    else add(svg, "text", { x: at + 2, y: 11 }, label);
  }
  const mark = vertical ? { x1: 1, y1: 484.5, x2: 15, y2: 484.5 } : { x1: 816.5, y1: 1, x2: 816.5, y2: 15 };
  add(svg, "line", { ...mark, stroke: "#ddd", "stroke-dasharray": "1 1" });
}
ruler("ruler-h", 154, 1037, false);
ruler("ruler-v", 8, 960, true);

// Product groups, followed by the blank rows of the sheet.
const groups = [
  ["", 17], ["Air Compressors", 9], ["Clothing > Outerwear > Mens > Work", 1],
  ["Clothing > Outerwear > Womens > Casual", 6], ["Clothing > Outerwear > Womens > Summer", 7],
  ["Furniture > Chairs", 3], ["Furniture > Sofas", 5], ["Tools > Hand Tools > Bolt Cutters", 5],
  ["Tools > Hand Tools > Saw", 1], ["Tools > Power Tools", 2], ["Tools > Power Tools > Power Drills", 2],
  ["Tools > Power Tools > Power Sanders", 1], ["Tools > Power Tools > Power Saw", 2],
];
const body = document.getElementById("rows");
for (const [name, count] of groups) {
  const row = body.insertRow();
  row.className = "group";
  row.insertCell().innerHTML = '<button class="twist" aria-label="Expand"><svg width="8" height="12" viewBox="0 0 8 10" preserveAspectRatio="none"><path d="M0 0l8 5-8 5z"/></svg></button>';
  const cell = row.insertCell();
  cell.colSpan = 6;
  cell.innerHTML = `<label><input type="checkbox"><span>${name.replace(/>/g, "&gt;")}</span><span class="count">(${count})</span></label>`;
}
for (let r = 0; r < 34; r++) {
  const row = body.insertRow();
  for (let c = 0; c < 7; c++) row.insertCell();
}
```
